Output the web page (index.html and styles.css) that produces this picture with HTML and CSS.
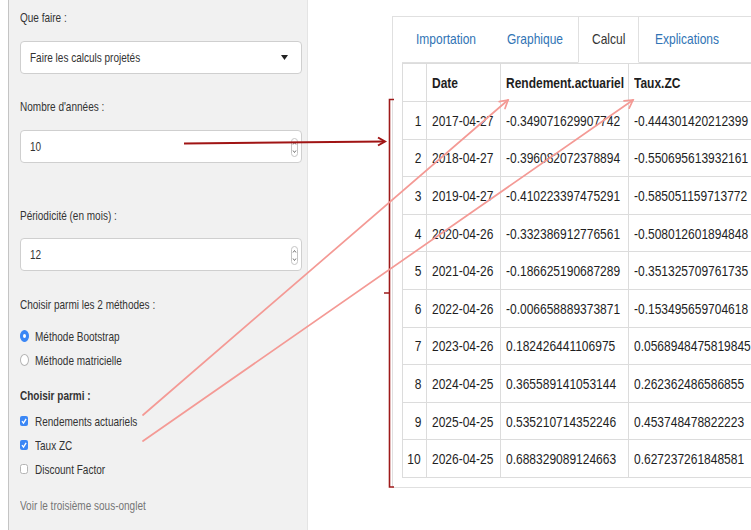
FILE: index.html
```html
<!DOCTYPE html>
<html lang="fr">
<head>
<meta charset="utf-8">
<title>Calcul</title>
<link rel="stylesheet" href="styles.css">
</head>
<body>
<div class="page">
  <aside class="sidebar">
    <div class="lbl"><span class="t">Que faire :</span></div>
    <div class="control select gap-13">
      <span class="t">Faire les calculs projetés</span>
      <svg class="caret" width="7" height="5" viewBox="0 0 7 5"><path d="M0 0H7L3.5 5Z" fill="#222"/></svg>
    </div>

    <div class="lbl gap-23"><span class="t">Nombre d'années :</span></div>
    <div class="control gap-13">
      <span class="t">10</span>
      <svg class="spin" width="7" height="19" viewBox="0 0 7 19"><rect x="0.5" y="0.5" width="6" height="18" rx="3" fill="#fff" stroke="#c4c4c4"/><path d="M2 6.5L3.5 4.5L5 6.5M2 12.5L3.5 14.5L5 12.5" fill="none" stroke="#666" stroke-width="0.9"/></svg>
    </div>

    <div class="lbl gap-43"><span class="t">Périodicité (en mois) :</span></div>
    <div class="control gap-12">
      <span class="t">12</span>
      <svg class="spin" width="7" height="19" viewBox="0 0 7 19"><rect x="0.5" y="0.5" width="6" height="18" rx="3" fill="#fff" stroke="#c4c4c4"/><path d="M2 6.5L3.5 4.5L5 6.5M2 12.5L3.5 14.5L5 12.5" fill="none" stroke="#666" stroke-width="0.9"/></svg>
    </div>

    <div class="lbl gap-24"><span class="t">Choisir parmi les 2 méthodes :</span></div>
    <div class="opt gap-9"><span class="radio on"></span><span class="t">Méthode Bootstrap</span></div>
    <div class="opt"><span class="radio"></span><span class="t">Méthode matricielle</span></div>

    <div class="lbl strong gap-14"><span class="t">Choisir parmi :</span></div>
    <div class="opt gap-3"><svg class="box" width="8" height="10" viewBox="0 0 8 10"><rect width="8" height="10" rx="2" fill="#3b87f5"/><path d="M2 5.2L3.5 7.2L6.1 2.8" fill="none" stroke="#fff" stroke-width="1.3"/></svg><span class="t">Rendements actuariels</span></div>
    <div class="opt"><svg class="box" width="8" height="10" viewBox="0 0 8 10"><rect width="8" height="10" rx="2" fill="#3b87f5"/><path d="M2 5.2L3.5 7.2L6.1 2.8" fill="none" stroke="#fff" stroke-width="1.3"/></svg><span class="t">Taux ZC</span></div>
    <div class="opt"><svg class="box" width="8" height="10" viewBox="0 0 8 10"><rect x="0.5" y="0.5" width="7" height="9" rx="2" fill="#fff" stroke="#b4b4b4"/></svg><span class="t">Discount Factor</span></div>

    <div class="help gap-15"><span class="t">Voir le troisième sous-onglet</span></div>
  </aside>

  <main class="panel">
    <nav class="tabs">
      <span class="tab"><span class="t">Importation</span></span>
      <span class="tab"><span class="t">Graphique</span></span>
      <span class="tab active"><span class="t">Calcul</span></span>
      <span class="tab"><span class="t">Explications</span></span>
    </nav>
    <table class="grid">
      <colgroup><col class="c-idx"><col class="c-date"><col class="c-rend"><col class="c-taux"></colgroup>
      <thead>
        <tr><th></th><th><span class="t">Date</span></th><th><span class="t">Rendement.actuariel</span></th><th><span class="t">Taux.ZC</span></th></tr>
      </thead>
      <tbody>
        <tr><td class="idx"><span class="t">1</span></td><td><span class="t">2017-04-27</span></td><td><span class="t">-0.349071629907742</span></td><td><span class="t">-0.444301420212399</span></td></tr>
        <tr><td class="idx"><span class="t">2</span></td><td><span class="t">2018-04-27</span></td><td><span class="t">-0.396082072378894</span></td><td><span class="t">-0.550695613932161</span></td></tr>
        <tr><td class="idx"><span class="t">3</span></td><td><span class="t">2019-04-27</span></td><td><span class="t">-0.410223397475291</span></td><td><span class="t">-0.585051159713772</span></td></tr>
        <tr><td class="idx"><span class="t">4</span></td><td><span class="t">2020-04-26</span></td><td><span class="t">-0.332386912776561</span></td><td><span class="t">-0.508012601894848</span></td></tr>
        <tr><td class="idx"><span class="t">5</span></td><td><span class="t">2021-04-26</span></td><td><span class="t">-0.186625190687289</span></td><td><span class="t">-0.351325709761735</span></td></tr>
        <tr><td class="idx"><span class="t">6</span></td><td><span class="t">2022-04-26</span></td><td><span class="t">-0.006658889373871</span></td><td><span class="t">-0.153495659704618</span></td></tr>
        <tr><td class="idx"><span class="t">7</span></td><td><span class="t">2023-04-26</span></td><td><span class="t">0.182426441106975</span></td><td><span class="t">0.0568948475819845</span></td></tr>
        <tr><td class="idx"><span class="t">8</span></td><td><span class="t">2024-04-25</span></td><td><span class="t">0.365589141053144</span></td><td><span class="t">0.262362486586855</span></td></tr>
        <tr><td class="idx"><span class="t">9</span></td><td><span class="t">2025-04-25</span></td><td><span class="t">0.535210714352246</span></td><td><span class="t">0.453748478822223</span></td></tr>
        <tr><td class="idx"><span class="t">10</span></td><td><span class="t">2026-04-25</span></td><td><span class="t">0.688329089124663</span></td><td><span class="t">0.627237261848581</span></td></tr>
      </tbody>
    </table>
  </main>

  <svg class="marks" width="751" height="530" viewBox="0 0 751 530">
    <!-- bracket around the result rows -->
    <path d="M394 99.5H389.5V487H394M389.5 293H384" fill="none" stroke="#9e1a1a" stroke-width="1.6"/>
    <!-- link from the year count to the table -->
    <path d="M184 143.5L384 141.5" stroke="#a01414" stroke-width="2" fill="none"/>
    <path d="M378 137.5L385 141.5L378 145.5" stroke="#a01414" stroke-width="2" fill="none"/>
    <!-- links from the checked series to their columns -->
    <g stroke="#f49a95" stroke-width="1.7" fill="none" stroke-linecap="round">
      <path d="M143 415L508 100"/>
      <path d="M499.2 101.7L508 100L505 108.5"/>
      <path d="M143 441L633 100"/>
      <path d="M624 100.8L633 100L629.2 108.2"/>
    </g>
  </svg>
</div>
</body>
</html>
```

FILE: styles.css
```css
html, body {
  margin: 0;
  padding: 0;
  background: #fff;
  overflow: hidden;
}

.page {
  position: relative;
  width: 751px;
  height: 530px;
  display: flex;
  align-items: flex-start;
  font-family: "Liberation Sans", Arial, sans-serif;
  color: #333;
}

/* condensed text run: the face is drawn narrower than its natural width */
.t {
  display: inline-block;
  white-space: nowrap;
  transform: scaleX(0.8);
  transform-origin: 0 50%;
}

/* left input column */
.sidebar {
  box-sizing: border-box;
  width: 300px;
  height: 540px;
  margin-left: 8px;
  padding: 8px 5px 0 11px;
  background: #f1f1f1;
  border-left: 1px solid #c4c4c4;
  border-right: 1px solid #e4e4e4;
  font-size: 13px;
  flex-shrink: 0;
}

.sidebar .t {
  transform: scaleX(0.77);
}

.lbl {
  height: 20px;
  line-height: 20px;
}

.lbl.strong {
  font-weight: 700;
}

.control {
  box-sizing: border-box;
  height: 33px;
  display: flex;
  align-items: center;
  justify-content: space-between;
  padding: 0 3px 0 9px;
  background: #fff;
  border: 1px solid #cfcfcf;
  border-radius: 4px;
  color: #333;
}

.control.select {
  padding-right: 13px;
}

.caret {
  display: block;
}

.spin {
  display: block;
  margin-top: 2px;
}

.opt {
  height: 24px;
  display: flex;
  align-items: center;
  color: #333;
}

.radio {
  box-sizing: border-box;
  width: 9px;
  height: 12px;
  margin-right: 6px;
  border-radius: 50%;
  background: #fff;
  border: 1px solid #b4b4b4;
  position: relative;
  flex-shrink: 0;
}

.radio.on {
  background: #3b87f5;
  border-color: #3b87f5;
}

.radio.on::after {
  content: "";
  position: absolute;
  left: 2px;
  top: 3px;
  width: 3px;
  height: 4px;
  border-radius: 50%;
  background: #fff;
}

.box {
  display: block;
  margin-right: 7px;
  flex-shrink: 0;
}

.help {
  height: 20px;
  line-height: 20px;
  color: #767676;
}

.gap-3 { margin-top: 3px; }
.gap-9 { margin-top: 9px; }
.gap-12 { margin-top: 12px; }
.gap-13 { margin-top: 13px; }
.gap-14 { margin-top: 14px; }
.gap-15 { margin-top: 15px; }
.gap-23 { margin-top: 23px; }
.gap-24 { margin-top: 24px; }
.gap-43 { margin-top: 43px; }

/* right tab panel */
.panel {
  box-sizing: border-box;
  width: 420px;
  margin-left: 84px;
  margin-top: 16px;
  padding: 0 0 9px 9px;
  border: 1px solid #e0e0e0;
  border-right: 0;
  flex-shrink: 0;
  font-size: 15px;
}

.tabs {
  display: grid;
  grid-template-columns: 89px 83px 61px 93px;
  column-gap: 2px;
  height: 46px;
  box-sizing: border-box;
  border-bottom: 1px solid #e0e0e0;
}

.tab {
  box-sizing: border-box;
  height: 46px;
  line-height: 43px;
  padding: 0 0 0 14px;
  color: #3174b5;
  white-space: nowrap;
  overflow: visible;
}

.tab.active {
  color: #333;
  background: #fff;
  border: 1px solid #e0e0e0;
  border-top: 0;
  border-bottom-color: #fff;
  padding-left: 13px;
}

.grid {
  border-collapse: collapse;
  table-layout: fixed;
  width: 370px;
  color: #1e1e1e;
}

.c-idx { width: 24px; }
.c-date { width: 74px; }
.c-rend { width: 128px; }
.c-taux { width: 144px; }

.grid th,
.grid td {
  border: 1px solid #dcdcdc;
  padding: 0 0 0 5px;
  text-align: left;
  white-space: nowrap;
  overflow: visible;
}

.grid th {
  height: 37px;
  font-weight: 700;
}

.grid td {
  height: 36.6px;
}

.grid td.idx {
  text-align: right;
  padding: 0 5px 0 0;
}

.grid td.idx .t {
  transform-origin: 100% 50%;
}

.marks {
  position: absolute;
  left: 0;
  top: 0;
  pointer-events: none;
}
```
